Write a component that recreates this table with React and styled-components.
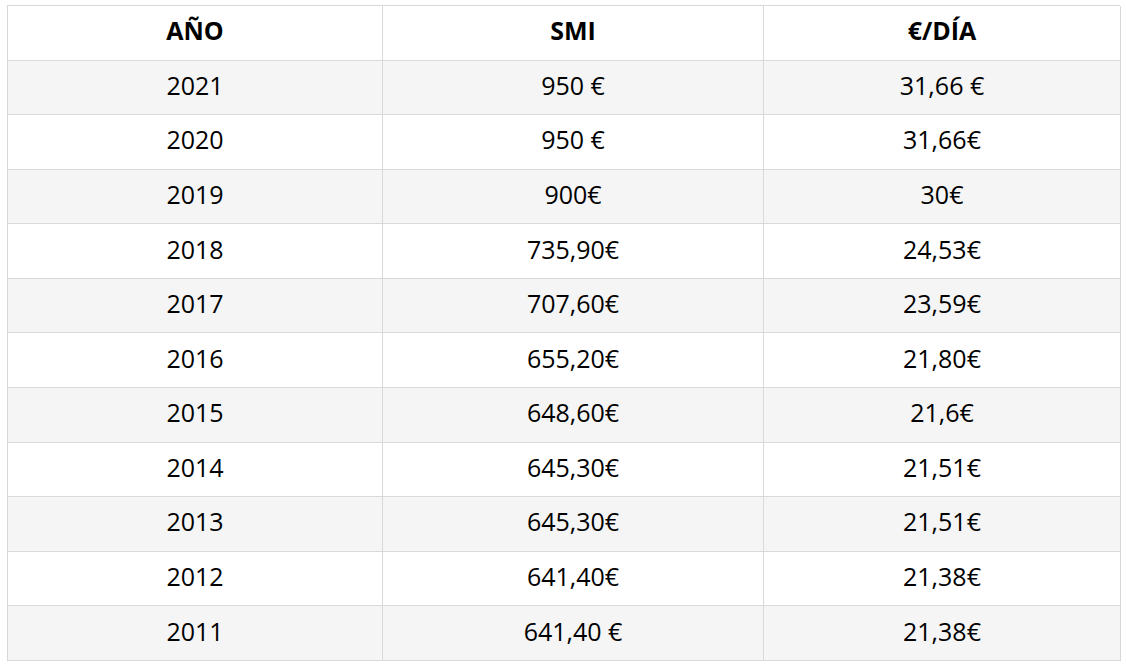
import React from "react";
import styled, { createGlobalStyle } from "styled-components";

const Global = createGlobalStyle`
  html, body { margin: 0; padding: 0; background: #ffffff; }
  body { font-family: "Open Sans", "Liberation Sans", sans-serif; }
`;

const Page = styled.div`
  padding: 5px 0 0 7px;
`;

const Table = styled.div`
  display: grid;
  grid-template-columns: 375px 381px 357px;
  grid-auto-rows: 54.58px;
  width: 1113px;
  border-top: 1px solid #d9d9d9;
  border-left: 1px solid #d9d9d9;
  box-sizing: border-box;
`;

const Cell = styled.div`
  display: flex;
  align-items: center;
  justify-content: center;
  border-right: 1px solid #d9d9d9;
  border-bottom: 1px solid #d9d9d9;
  background: ${(p) => (p.$shaded ? "#f5f5f5" : "#ffffff")};
  font-size: 25px;
  font-weight: ${(p) => (p.$head ? 700 : 400)};
  color: #000;
  box-sizing: border-box;
  padding-bottom: 5px;
`;

const head = ["AÑO", "SMI", "€/DÍA"];
const rows = [
  ["2021", "950 €", "31,66 €"],
  ["2020", "950 €", "31,66€"],
  ["2019", "900€", "30€"],
  ["2018", "735,90€", "24,53€"],
  ["2017", "707,60€", "23,59€"],
  ["2016", "655,20€", "21,80€"],
  ["2015", "648,60€", "21,6€"],
  ["2014", "645,30€", "21,51€"],
  ["2013", "645,30€", "21,51€"],
  ["2012", "641,40€", "21,38€"],
  ["2011", "641,40 €", "21,38€"],
];

export default function App() {
  return (
    <Page>
      <Global />
      <Table>
        {head.map((h) => (
          <Cell key={h} $head>
            {h}
          </Cell>
        ))}
        {rows.map((r, i) =>
          r.map((c, j) => (
            <Cell key={i + "-" + j} $shaded={i % 2 === 0}>
              {c}
            </Cell>
          ))
        )}
      </Table>
    </Page>
  );
}
